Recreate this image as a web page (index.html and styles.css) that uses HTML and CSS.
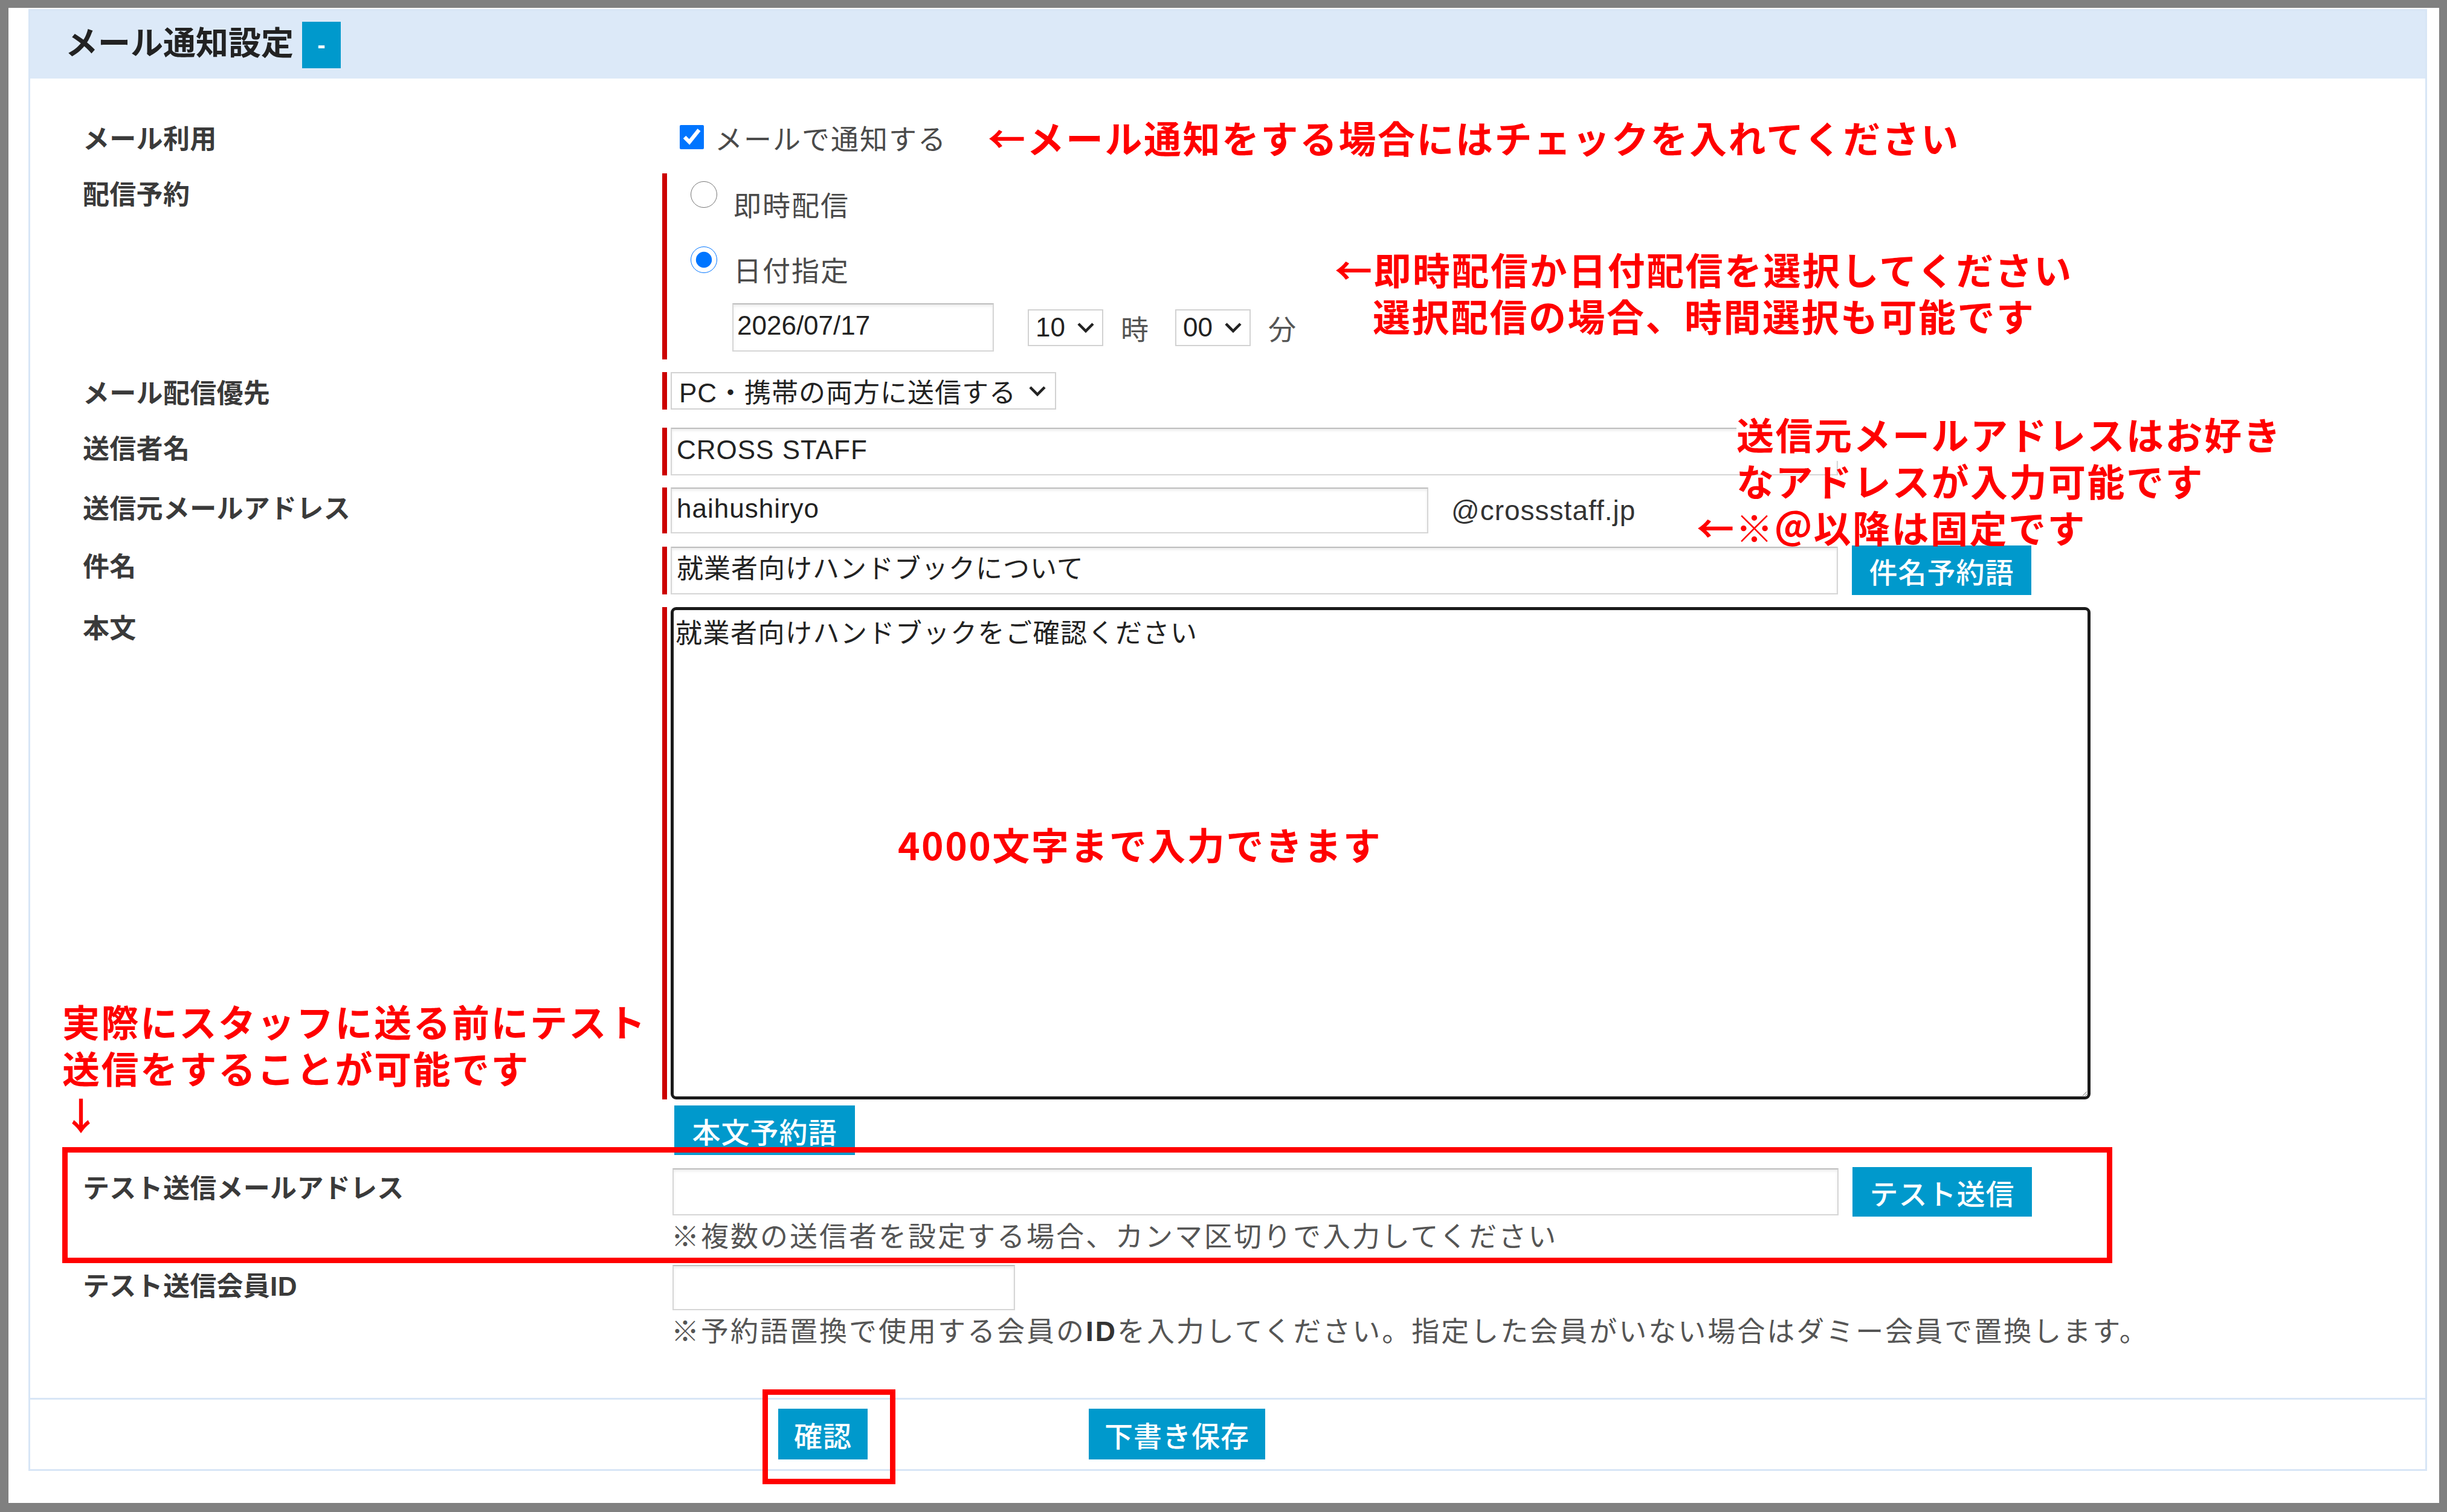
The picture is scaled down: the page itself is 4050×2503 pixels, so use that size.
FILE: index.html
```html
<!DOCTYPE html>
<html lang="ja">
<head>
    <meta charset="UTF-8">
    <meta name="viewport" content="width=device-width, initial-scale=1.0">
    <title>メール通知設定</title>
    <link rel="stylesheet" href="styles.css">
</head>
<body>
    <div class="sheet">
        <section class="panel">
            <!-- Panel header -->
            <div class="panel-head">
                <h2>メール通知設定</h2>
                <button class="toggle-button">-</button>
            </div>

            <!-- Form rows -->
            <div class="panel-body">
                <div class="row row-use">
                    <div class="row-label">メール利用</div>
                    <div class="row-value value-check">
                        <input type="checkbox" checked>
                        <span class="value-text">メールで通知する</span>
                    </div>
                </div>

                <div class="row row-schedule">
                    <div class="row-label">配信予約</div>
                    <div class="row-value">
                        <div class="req req-block">
                            <label class="radio-line">
                                <input type="radio" name="schedule">
                                <span class="value-text radio-text">即時配信</span>
                            </label>
                            <label class="radio-line radio-second">
                                <input type="radio" name="schedule" checked>
                                <span class="value-text radio-text">日付指定</span>
                            </label>
                            <div class="date-line">
                                <input class="field field-date" type="text" value="2026/07/17">
                                <div class="select select-time">
                                    <span>10</span>
                                    <svg width="30" height="18" viewBox="0 0 30 18"><path d="M3 3 L15 15 L27 3" fill="none" stroke="#222" stroke-width="4.5"/></svg>
                                </div>
                                <span class="unit">時</span>
                                <div class="select select-time select-minute">
                                    <span>00</span>
                                    <svg width="30" height="18" viewBox="0 0 30 18"><path d="M3 3 L15 15 L27 3" fill="none" stroke="#222" stroke-width="4.5"/></svg>
                                </div>
                                <span class="unit">分</span>
                            </div>
                        </div>
                    </div>
                </div>

                <div class="row row-priority">
                    <div class="row-label">メール配信優先</div>
                    <div class="row-value">
                        <div class="req">
                            <div class="select select-wide">
                                <span>PC・携帯の両方に送信する</span>
                                <svg width="30" height="18" viewBox="0 0 30 18"><path d="M3 3 L15 15 L27 3" fill="none" stroke="#222" stroke-width="4.5"/></svg>
                            </div>
                        </div>
                    </div>
                </div>

                <div class="row row-sender">
                    <div class="row-label">送信者名</div>
                    <div class="row-value">
                        <div class="req">
                            <input class="field field-long" type="text" value="CROSS STAFF">
                        </div>
                    </div>
                </div>

                <div class="row">
                    <div class="row-label">送信元メールアドレス</div>
                    <div class="row-value value-inline">
                        <div class="req">
                            <input class="field field-address" type="text" value="haihushiryo">
                        </div>
                        <span class="domain">@crossstaff.jp</span>
                    </div>
                </div>

                <div class="row">
                    <div class="row-label">件名</div>
                    <div class="row-value value-inline">
                        <div class="req">
                            <input class="field field-long field-subject" type="text" value="就業者向けハンドブックについて">
                        </div>
                        <button class="blue-button side-button">件名予約語</button>
                    </div>
                </div>

                <div class="row">
                    <div class="row-label">本文</div>
                    <div class="row-value value-stack">
                        <div class="req">
                            <textarea class="body-text">就業者向けハンドブックをご確認ください</textarea>
                        </div>
                        <button class="blue-button body-button">本文予約語</button>
                    </div>
                </div>

                <div class="row">
                    <div class="row-label">テスト送信メールアドレス</div>
                    <div class="row-value value-plain">
                        <div class="value-inline">
                            <input class="field field-test" type="text">
                            <button class="blue-button side-button">テスト送信</button>
                        </div>
                        <p class="note note-test">※複数の送信者を設定する場合、カンマ区切りで入力してください</p>
                    </div>
                </div>

                <div class="row row-member">
                    <div class="row-label">テスト送信会員<b>ID</b></div>
                    <div class="row-value value-plain">
                        <input class="field field-member" type="text">
                        <p class="note note-member">※予約語置換で使用する会員の<b>ID</b>を入力してください。指定した会員がいない場合はダミー会員で置換します。</p>
                    </div>
                </div>
            </div>

            <!-- Panel footer -->
            <div class="panel-foot">
                <button class="blue-button foot-button">確認</button>
                <button class="blue-button foot-button">下書き保存</button>
            </div>
        </section>
    </div>

    <!-- Red notes drawn over the form -->
    <div class="note-red red-check">←メール通知をする場合にはチェックを入れてください</div>
    <div class="note-red red-schedule">
        <div>←即時配信か日付配信を選択してください</div>
        <div class="indent">選択配信の場合、時間選択も可能です</div>
    </div>
    <div class="note-red red-address">
        <div class="indent-wide"><span class="cover">送信元メールアドレスはお好き</span></div>
        <div class="indent-wide">なアドレスが入力可能です</div>
        <div>←※＠以降は固定です</div>
    </div>
    <div class="note-red red-limit">4000文字まで入力できます</div>
    <div class="note-red red-test">
        <div>実際にスタッフに送る前にテスト</div>
        <div>送信をすることが可能です</div>
        <div>↓</div>
    </div>
    <div class="red-box box-test"></div>
    <div class="red-box box-confirm"></div>
</body>
</html>
```

FILE: styles.css
```css
html, body {
    margin: 0;
    background: #808080;
}

body {
    position: relative;
    font-family: "Noto Sans CJK JP", sans-serif;
    color: #333;
}

.sheet {
    margin: 13px 13px 0 14px;
    height: 2475px;
    padding: 2px 20px 0 33px;
    box-sizing: border-box;
    background: #fff;
}

.panel {
    border: 3px solid #d8e6f6;
}

.panel-head {
    display: flex;
    align-items: center;
    height: 112px;
    padding-left: 58px;
    background: #dce9f8;
}

.panel-head h2 {
    margin: 0 0 14px;
    font-size: 54px;
    font-weight: bold;
    color: #222;
}

.toggle-button {
    width: 64px;
    height: 77px;
    margin-left: 14px;
    border: none;
    background: #0099cc;
    color: #fff;
    font-size: 40px;
    font-weight: bold;
    font-family: "Liberation Sans", sans-serif;
}

.panel-body {
    padding: 70px 0 83px;
}

.row {
    display: grid;
    grid-template-columns: 1046px 1fr;
    margin-top: 20px;
}

.row-label {
    padding: 6px 0 0 87px;
    font-size: 44px;
    line-height: 53px;
    font-weight: bold;
    letter-spacing: 0.3px;
    color: #3a3a3a;
}

.row-label b {
    font-family: "Liberation Sans", sans-serif;
}

.row-use {
    margin-top: 0;
    height: 54px;
}

.row-use .row-label {
    padding-top: 0;
    line-height: 54px;
}

.row-schedule {
    margin-top: 33px;
}

.row-priority {
    margin-top: 21px;
}

.row-sender {
    margin-top: 30px;
}

.row-member {
    margin-top: 24px;
}

.value-text {
    font-size: 46px;
    line-height: 53px;
    letter-spacing: 2px;
    color: #4a4a4a;
}

.value-check {
    display: flex;
    align-items: center;
    padding-left: 29px;
}

.value-check input {
    width: 40px;
    height: 40px;
    margin: 0 18px 0 0;
}

.req {
    display: flex;
    align-items: center;
    border-left: 8px solid #cc0000;
    padding-left: 6px;
}

.req-block {
    display: block;
    padding-top: 13px;
    padding-bottom: 13px;
}

.radio-line {
    display: flex;
    align-items: flex-start;
    margin-left: 33px;
}

.radio-line input {
    width: 44px;
    height: 44px;
    margin: 0;
}

.radio-text {
    margin: 11px 0 0 27px;
}

.radio-second {
    margin-top: 44px;
}

.date-line {
    display: flex;
    align-items: center;
    margin: 30px 0 0 102px;
}

.field {
    height: 79px;
    box-sizing: border-box;
    padding: 0 8px 6px;
    border: 2px solid #d6d6d6;
    border-top-color: #bdbdbd;
    box-shadow: inset 0 3px 4px rgba(0, 0, 0, 0.08);
    background: #fff;
    font-family: "Liberation Sans", "Noto Sans CJK JP", sans-serif;
    font-size: 44px;
    letter-spacing: 1px;
    color: #222;
    outline: none;
}

.field-date {
    width: 433px;
    height: 80px;
    padding-left: 6px;
    letter-spacing: 0;
}

.field-long {
    width: 1932px;
}

.field-subject {
    padding-bottom: 12px;
}

.field-address {
    width: 1254px;
    height: 76px;
}

.field-test {
    width: 1930px;
    height: 78px;
}

.field-member {
    width: 567px;
    height: 75px;
}

.select {
    display: flex;
    align-items: center;
    justify-content: space-between;
    box-sizing: border-box;
    border: 2px solid #d2d2d2;
    background: #fff;
    font-family: "Liberation Sans", "Noto Sans CJK JP", sans-serif;
    font-size: 44px;
    color: #222;
}

.select-time {
    width: 125px;
    height: 61px;
    margin-left: 56px;
    padding: 0 12px 0 11px;
}

.select-minute {
    margin-left: 44px;
}

.select-wide {
    width: 638px;
    height: 62px;
    padding: 0 14px 0 12px;
    letter-spacing: 1px;
}

.unit {
    margin-left: 29px;
    font-size: 46px;
    color: #555;
}

.value-inline {
    display: flex;
    align-items: center;
}

.domain {
    margin-left: 38px;
    font-family: "Liberation Sans", sans-serif;
    font-size: 46px;
    letter-spacing: 1px;
    color: #333;
}

.blue-button {
    height: 82px;
    padding: 0 26px;
    border: none;
    background: #0099cc;
    color: #fff;
    font-family: "Noto Sans CJK JP", sans-serif;
    font-size: 47px;
    font-weight: 500;
    letter-spacing: 1px;
}

.side-button {
    width: 297px;
    margin-left: 23px;
}

.value-stack {
    display: flex;
    flex-direction: column;
    align-items: flex-start;
}

.body-text {
    width: 2350px;
    height: 815px;
    box-sizing: border-box;
    padding: 12px 3px;
    border: 5px solid #1a1a1a;
    border-radius: 9px;
    font-family: "Liberation Sans", "Noto Sans CJK JP", sans-serif;
    font-size: 44px;
    line-height: 53px;
    letter-spacing: 1.5px;
    color: #222;
    outline: none;
}

.body-button {
    width: 299px;
    margin: 10px 0 0 20px;
}

.value-plain {
    padding-left: 17px;
}

.note {
    margin: 5px 0 0 -2px;
    font-size: 46px;
    line-height: 53px;
    letter-spacing: 3px;
    color: #555;
}

.note b {
    font-family: "Liberation Sans", sans-serif;
    color: #333;
}

.note-test {
    margin-top: 3px;
}

.panel-foot {
    display: flex;
    gap: 366px;
    border-top: 3px solid #d8e6f6;
    padding: 15px 0 16px 1238px;
}

.foot-button {
    height: 84px;
}

/* red notes */
.note-red {
    position: absolute;
    color: #ff0000;
    font-size: 62px;
    line-height: 77px;
    font-weight: bold;
    letter-spacing: 2.5px;
    white-space: nowrap;
}

.red-check {
    left: 1635px;
    top: 189px;
}

.red-schedule {
    left: 2209px;
    top: 407px;
}

.red-schedule .indent {
    padding-left: 63px;
}

.red-address {
    left: 2808px;
    top: 680px;
}

.red-address .indent-wide {
    padding-left: 66px;
}

.cover {
    background: #fff;
}

.red-limit {
    left: 1486px;
    top: 1359px;
}

.red-test {
    left: 103px;
    top: 1652px;
}

.red-box {
    position: absolute;
    box-sizing: border-box;
    border: 9px solid #ff0000;
}

.box-test {
    left: 103px;
    top: 1899px;
    width: 3393px;
    height: 192px;
}

.box-confirm {
    left: 1262px;
    top: 2300px;
    width: 220px;
    height: 157px;
}
```
